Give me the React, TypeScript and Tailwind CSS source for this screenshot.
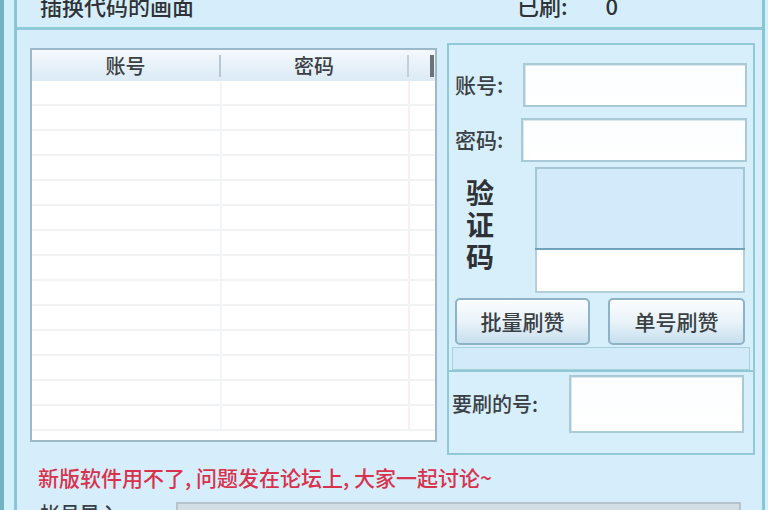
const CJK = { fontFamily: '"Noto Sans CJK SC", "Liberation Sans", sans-serif' };

const ROWS = Array.from({ length: 14 }, (_, i) => i);

function TextBox({ className }: { className: string }) {
  return (
    <div
      className={`border-2 border-[#a9c9d6] bg-gradient-to-b from-[#fbfdff] to-white shadow-[inset_1px_1px_0_#dbe8ee] ${className}`}
    />
  );
}

function ShuaButton({ label, className }: { label: string; className: string }) {
  return (
    <button
      className={`flex items-center justify-center rounded-[5px] border-2 border-[#8fb3c6] bg-gradient-to-b from-[#fbfdff] via-[#e9f3f9] to-[#c7dfee] text-[21px] font-medium text-[#3a3f44] ${className}`}
    >
      {label}
    </button>
  );
}

function AccountTable() {
  return (
    <div className="mt-[18px] flex h-[394px] w-[407px] flex-col overflow-hidden border-2 border-[#9cb9c5] bg-white">
      <div className="flex h-[31px] shrink-0 items-center bg-gradient-to-b from-[#f4f9fd] to-[#dbeaf5] text-[20px] font-medium text-[#3b3f44]">
        <div className="flex w-[187px] justify-center">账号</div>
        <div className="h-[22px] w-[2px] bg-[#b8c8d2]" />
        <div className="flex w-[186px] justify-center">密码</div>
        <div className="h-[22px] w-[2px] bg-[#c3d0d8]" />
        <div className="w-[21px]" />
        <div className="h-[22px] w-[4px] bg-[#6c7378]" />
      </div>
      <div className="flex flex-1 flex-col">
        {ROWS.map((r) => (
          <div key={r} className="flex h-[25px] shrink-0 border-b-2 border-[#f1f3f4]">
            <div className="w-[190px] border-r-2 border-[#f4f5f6]" />
            <div className="w-[188px] border-r-2 border-[#f8f0f0]" />
            <div className="flex-1" />
          </div>
        ))}
      </div>
    </div>
  );
}

function ControlGroup() {
  return (
    <div className="mt-[13px] flex h-[412px] w-[308px] flex-col border-2 border-[#93c8d6] bg-[#d7eefb] font-medium">
      <div className="mt-[18px] flex items-center pl-[6px] pr-[6px]">
        <span className="w-[68px] text-[21px] text-[#3a3f44]">账号:</span>
        <TextBox className="h-[44px] w-[224px]" />
      </div>
      <div className="mt-[11px] flex items-center pl-[6px] pr-[6px]">
        <span className="w-[66px] text-[21px] text-[#3a3f44]">密码:</span>
        <TextBox className="h-[44px] w-[226px]" />
      </div>
      <div className="mt-[5px] flex">
        <div className="flex w-[86px] flex-col items-start pt-[9px] pl-[17px] text-[28px] font-bold leading-[32px] text-[#2e3236]">
          <span>验</span>
          <span>证</span>
          <span>码</span>
        </div>
        <div className="flex w-[210px] flex-col">
          <div className="h-[81px] border-2 border-b-0 border-[#a4c6d3] bg-[#d2eafa]" />
          <div className="h-[2px] bg-[#6ea3bb]" />
          <div className="h-[43px] border-2 border-t-0 border-[#b3cfda] bg-white" />
        </div>
      </div>
      <div className="mt-[5px] flex pl-[6px]">
        <ShuaButton label="批量刷赞" className="h-[47px] w-[135px]" />
        <ShuaButton label="单号刷赞" className="ml-[18px] h-[47px] w-[137px]" />
      </div>
      <div className="mx-[3px] mt-[2px] h-[23px] border border-[#a6d0dc] bg-[#d3eafb]" />
      <div className="h-[2px] bg-[#8fc8d5]" />
      <div className="mt-[3px] flex items-center pl-[3px]">
        <span className="w-[117px] text-[20px] text-[#3a3f44]">要刷的号:</span>
        <TextBox className="h-[58px] w-[175px]" />
      </div>
    </div>
  );
}

export default function App() {
  return (
    <div className="flex h-[510px] w-[768px] overflow-hidden bg-[#d6eefb]" style={CJK}>
      <div className="w-[4px] bg-[#72b4c3]" />
      <div className="w-[10px] bg-[#d3f1fb]" />
      <div className="w-[3px] bg-[#8ac5d3]" />
      <div className="flex flex-1 flex-col">
        <div className="flex h-[27px] shrink-0 items-end overflow-hidden text-[22px] font-medium leading-[28px] text-[#2f3336]">
          <span className="ml-[23px] mb-[8px]">插换代码的画面</span>
          <span className="ml-[323px] mb-[8px]">已刷:</span>
          <span className="ml-[38px] mb-[8px]">0</span>
        </div>
        <div className="h-[3px] shrink-0 bg-[#8fcad8]" />
        <div className="flex items-start gap-[10px] pl-[13px]">
          <AccountTable />
          <ControlGroup />
        </div>
        <div className="mt-[8px] pl-[21px] text-[21px] font-medium leading-[28px] text-[#d8324d]">
          新版软件用不了, 问题发在论坛上, 大家一起讨论~
        </div>
        <div className="mt-[11px] flex items-start">
          <span className="ml-[23px] text-[20px] font-medium leading-[24px] text-[#3a3f44]">帐号导入:</span>
          <div className="ml-[50px] h-[20px] w-[565px] border-2 border-[#b4c3cc] bg-[#d2dde4]" />
        </div>
      </div>
      <div className="w-[3px] bg-[#8ac5d3]" />
      <div className="w-[3px] bg-[#d3f1fb]" />
    </div>
  );
}
